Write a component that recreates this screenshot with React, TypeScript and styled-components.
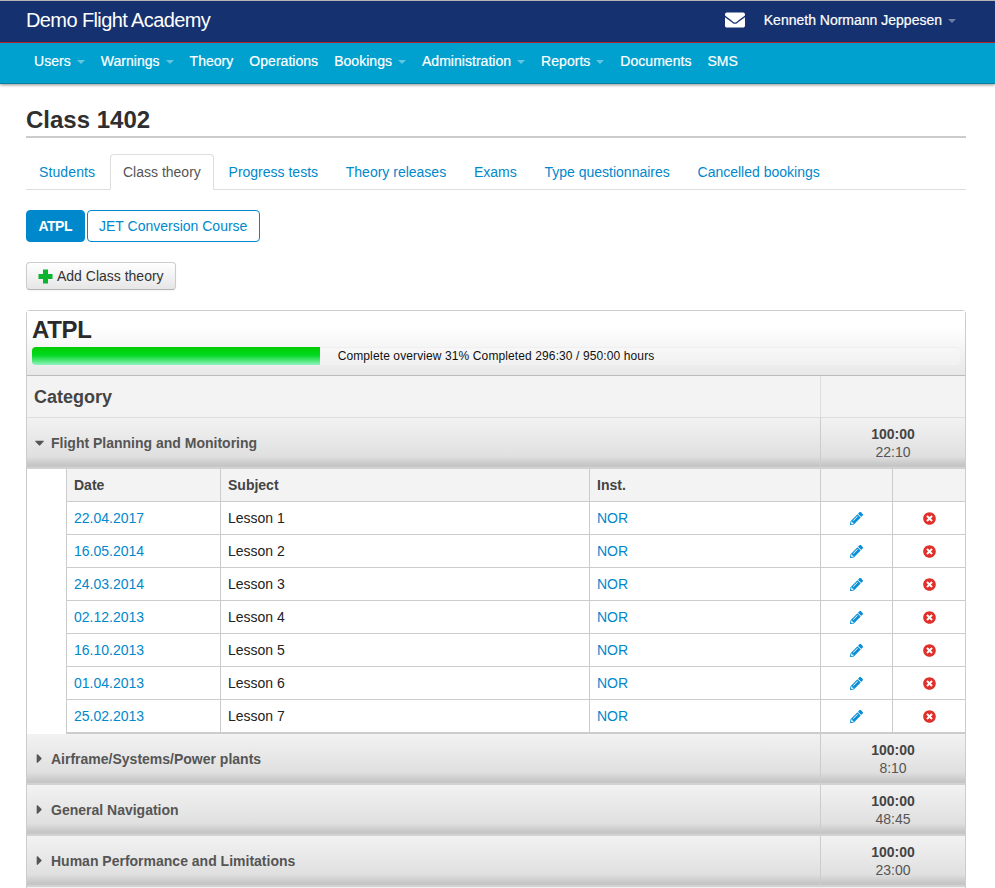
import styled, { createGlobalStyle } from 'styled-components';
import { FaEnvelope, FaPencilAlt, FaTimesCircle, FaCaretDown, FaCaretRight } from 'react-icons/fa';

const GlobalStyle = createGlobalStyle`
   html, body {
      margin: 0;
      height: 888px;
      overflow: hidden;
      background: #fff;
      font-family: 'Liberation Sans', Arial, sans-serif;
      font-size: 14px;
      color: #333;
   }
   * { box-sizing: border-box; }
   a { color: #0088cc; text-decoration: none; }
`;

const TopBar = styled.header`
   height: 43px;
   border-top: 1px solid #b5b5b5;
   border-bottom: 1px solid #c8232c;
   background: #15316f;
   display: flex;
   align-items: center;
   justify-content: space-between;
   padding: 0 39px 3px 26px;
   color: #fff;
`;

const Brand = styled.span`
   font-size: 20px;
   letter-spacing: -0.6px;
   font-weight: 300;
`;

const UserArea = styled.div`
   display: flex;
   align-items: center;
   gap: 19px;
   font-size: 14px;
   font-weight: 400;
   -webkit-text-stroke: 0.2px #fff;
`;

const User = styled.span`
   display: flex;
   align-items: center;
`;

const Caret = styled.i<{ $color: string }>`
   display: inline-block;
   width: 0;
   height: 0;
   margin-left: 6px;
   margin-top: 2px;
   border-left: 4px solid transparent;
   border-right: 4px solid transparent;
   border-top: 4px solid ${({ $color }) => $color};
`;

const NavBar = styled.nav`
   height: 41px;
   background: #00a1cf;
   border-bottom: 1px solid #0a7f9f;
   box-shadow: 0 1px 3px rgba(0, 0, 0, 0.45);
   display: flex;
   align-items: center;
   gap: 16px;
   padding: 0 0 4px 34px;
`;

const NavItem = styled.span`
   display: flex;
   align-items: center;
   color: #fff;
   font-size: 14px;
   letter-spacing: 0.03px;
   -webkit-text-stroke: 0.2px #fff;
`;

const Main = styled.main`
   padding: 23px 29px 0 26px;
`;

const Title = styled.h1`
   margin: 0 0 16px;
   height: 31px;
   border-bottom: 2px solid #ccc;
   font-size: 24px;
   line-height: 26px;
   font-weight: 700;
   color: #2f2f2f;
`;

const Tabs = styled.div`
   display: flex;
   height: 36px;
   border-bottom: 1px solid #ddd;
   gap: 1.75px;
`;

const Tab = styled.a<{ $active?: boolean }>`
   height: 36px;
   padding: 0 12px;
   line-height: 35px;
   font-size: 14px;
   border-radius: 4px 4px 0 0;
   border: 1px solid ${({ $active }) => ($active ? '#ddd' : 'transparent')};
   border-bottom-color: ${({ $active }) => ($active ? '#fff' : 'transparent')};
   background: ${({ $active }) => ($active ? '#fff' : 'transparent')};
   color: ${({ $active }) => ($active ? '#555' : '#0088cc')};
   &:first-child {
      letter-spacing: 0.12px;
   }
`;

const Pills = styled.div`
   display: flex;
   gap: 2px;
   margin-top: 20px;
`;

const Pill = styled.a<{ $active?: boolean }>`
   height: 32px;
   padding: 0 11.5px;
   line-height: 30px;
   font-size: 14px;
   letter-spacing: ${({ $active }) => ($active ? '-0.5px' : '0')};
   border-radius: 4px;
   border: 1px solid #0088cc;
   font-weight: ${({ $active }) => ($active ? 700 : 400)};
   background: ${({ $active }) => ($active ? '#0088cc' : '#fff')};
   color: ${({ $active }) => ($active ? '#fff' : '#0088cc')};
`;

const AddButton = styled.button`
   display: flex;
   align-items: center;
   gap: 4px;
   width: 150px;
   height: 28px;
   margin-top: 20px;
   padding: 0 11px;
   border: 1px solid #ccc;
   border-bottom-color: #b3b3b3;
   border-radius: 4px;
   background: linear-gradient(#fff, #e6e6e6);
   box-shadow: 0 1px 2px rgba(0, 0, 0, 0.05);
   font-family: inherit;
   font-size: 14px;
   color: #333;
`;

const PlusIcon = () => (
   <svg width='15' height='15' viewBox='0 0 15 15'>
      <path d='M5 0.5h5v4.5h4.5v5h-4.5v4.5h-5v-4.5h-4.5v-5h4.5z' fill='#0cb32f' />
   </svg>
);

const Panel = styled.section`
   margin-top: 20px;
   border: 1px solid #ccc;
   border-radius: 4px 4px 0 0;
   border-bottom: 0;
`;

const PanelHead = styled.div`
   height: 65px;
   padding: 6px 5px 0;
   background: linear-gradient(#fff 0, #fff 15px, #e8e8e8 100%);
   border-bottom: 1px solid #bbb;
`;

const PanelTitle = styled.h2`
   margin: 0;
   height: 30px;
   font-size: 24px;
   line-height: 25px;
   letter-spacing: -0.3px;
   font-weight: 700;
   color: #2a2a2a;
`;

const Progress = styled.div`
   height: 18px;
   border-radius: 4px;
   background: linear-gradient(#f8f8f8, #f1f1f1);
   box-shadow: inset 0 1px 1px rgba(0, 0, 0, 0.04);
   display: flex;
   align-items: center;
`;

const ProgressFill = styled.div`
   height: 100%;
   background: linear-gradient(#00cc00, #00d820 45%, #8ff3c0);
   border-radius: 4px 0 0 4px;
   flex: none;
`;

const ProgressText = styled.span`
   margin-left: 18px;
   font-size: 12px;
   letter-spacing: 0.11px;
   color: #111;
`;

const HeadRow = styled.div`
   display: grid;
   grid-template-columns: 1fr 145px;
   height: 42px;
   background: #f3f3f3;
   border-bottom: 1px solid #ddd;
`;

const HeadCell = styled.div`
   padding-left: 7px;
   font-size: 18px;
   font-weight: 700;
   line-height: 43px;
   color: #444;
   & + & {
      border-left: 1px solid #ddd;
   }
`;

const CategoryRow = styled.div`
   display: grid;
   grid-template-columns: 1fr 145px;
   height: 51px;
   background: linear-gradient(#f2f2f2 0, #e0e0e0 78%, #c6c6c6 96%, #c6c6c6 100%);
   border-bottom: 2px solid #d2d2d2;
   color: #555;
`;

const NextCategoryEdge = styled.div`
   height: 1px;
   background: #f2f2f2;
`;

const CategoryName = styled.div`
   display: flex;
   align-items: center;
   padding: 0 0 0 7px;
   font-weight: 700;
   font-size: 14px;
   color: #555;
`;

const CaretSlot = styled.span`
   display: flex;
   width: 11px;
   margin-right: 6px;
   font-size: 15px;
   color: #555;
`;

const Hours = styled.div`
   border-left: 1px solid #ccc;
   display: flex;
   flex-direction: column;
   align-items: center;
   justify-content: center;
   line-height: 18px;
   padding-top: 1px;
   font-size: 14px;
`;

const HoursTotal = styled.strong`
   font-weight: 700;
   color: #444;
`;

const Lessons = styled.div`
   margin-left: 39px;
   border-left: 1px solid #ccc;
   border-bottom: 1px solid #ccc;
`;

const LessonRow = styled.div<{ $head?: boolean }>`
   display: grid;
   grid-template-columns: 153px 369px 231px 72px 73px;
   height: 33px;
   border-bottom: 1px solid #ccc;
   background: ${({ $head }) => ($head ? '#f3f3f3' : '#fff')};
`;

const LessonCell = styled.div<{ $head?: boolean; $center?: boolean }>`
   display: flex;
   align-items: center;
   justify-content: ${({ $center }) => ($center ? 'center' : 'flex-start')};
   padding-left: ${({ $center }) => ($center ? 0 : '7px')};
   font-weight: ${({ $head }) => ($head ? 700 : 400)};
   color: ${({ $head }) => ($head ? '#444' : '#222')};
   & + & {
      border-left: 1px solid ${({ $head }) => ($head ? '#ddd' : '#ccc')};
   }
`;

const EditIcon = styled(FaPencilAlt)`
   color: #0a8fd6;
   font-size: 13px;
`;

const RemoveIcon = styled(FaTimesCircle)`
   color: #e0302a;
   font-size: 13px;
`;

const lessons = [
   ['22.04.2017', 'Lesson 1'],
   ['16.05.2014', 'Lesson 2'],
   ['24.03.2014', 'Lesson 3'],
   ['02.12.2013', 'Lesson 4'],
   ['16.10.2013', 'Lesson 5'],
   ['01.04.2013', 'Lesson 6'],
   ['25.02.2013', 'Lesson 7'],
];

const navItems: [string, boolean][] = [
   ['Users', true],
   ['Warnings', true],
   ['Theory', false],
   ['Operations', false],
   ['Bookings', true],
   ['Administration', true],
   ['Reports', true],
   ['Documents', false],
   ['SMS', false],
];

const tabs = ['Students', 'Class theory', 'Progress tests', 'Theory releases', 'Exams', 'Type questionnaires', 'Cancelled bookings'];

const closedCategories = [
   ['Airframe/Systems/Power plants', '8:10'],
   ['General Navigation', '48:45'],
   ['Human Performance and Limitations', '23:00'],
];

const Category = ({ name, done, open }: { name: string; done: string; open?: boolean }) => (
   <CategoryRow>
      <CategoryName>
         <CaretSlot>{open ? <FaCaretDown /> : <FaCaretRight />}</CaretSlot>
         {name}
      </CategoryName>
      <Hours>
         <HoursTotal>100:00</HoursTotal>
         <span>{done}</span>
      </Hours>
   </CategoryRow>
);

const App = () => (
   <>
      <GlobalStyle />
      <TopBar>
         <Brand>Demo Flight Academy</Brand>
         <UserArea>
            <FaEnvelope size={20} />
            <User>
               Kenneth Normann Jeppesen
               <Caret $color='#6f7fa6' />
            </User>
         </UserArea>
      </TopBar>
      <NavBar>
         {navItems.map(([label, hasCaret]) => (
            <NavItem key={label}>
               {label}
               {hasCaret && <Caret $color='#66c5e0' />}
            </NavItem>
         ))}
      </NavBar>
      <Main>
         <Title>Class 1402</Title>
         <Tabs>
            {tabs.map((tab) => (
               <Tab key={tab} $active={tab === 'Class theory'}>
                  {tab}
               </Tab>
            ))}
         </Tabs>
         <Pills>
            <Pill $active>ATPL</Pill>
            <Pill>JET Conversion Course</Pill>
         </Pills>
         <AddButton>
            <PlusIcon />
            Add Class theory
         </AddButton>
         <Panel>
            <PanelHead>
               <PanelTitle>ATPL</PanelTitle>
               <Progress>
                  <ProgressFill style={{ width: '31%' }} />
                  <ProgressText>Complete overview 31% Completed 296:30 / 950:00 hours</ProgressText>
               </Progress>
            </PanelHead>
            <HeadRow>
               <HeadCell>Category</HeadCell>
               <HeadCell />
            </HeadRow>
            <Category name='Flight Planning and Monitoring' done='22:10' open />
            <Lessons>
               <LessonRow $head>
                  <LessonCell $head>Date</LessonCell>
                  <LessonCell $head>Subject</LessonCell>
                  <LessonCell $head>Inst.</LessonCell>
                  <LessonCell $head />
                  <LessonCell $head />
               </LessonRow>
               {lessons.map(([date, subject]) => (
                  <LessonRow key={subject}>
                     <LessonCell>
                        <a>{date}</a>
                     </LessonCell>
                     <LessonCell>{subject}</LessonCell>
                     <LessonCell>
                        <a>NOR</a>
                     </LessonCell>
                     <LessonCell $center>
                        <EditIcon />
                     </LessonCell>
                     <LessonCell $center>
                        <RemoveIcon />
                     </LessonCell>
                  </LessonRow>
               ))}
            </Lessons>
            {closedCategories.map(([name, done]) => (
               <Category key={name} name={name} done={done} />
            ))}
            <NextCategoryEdge />
         </Panel>
      </Main>
   </>
);

export default App;
